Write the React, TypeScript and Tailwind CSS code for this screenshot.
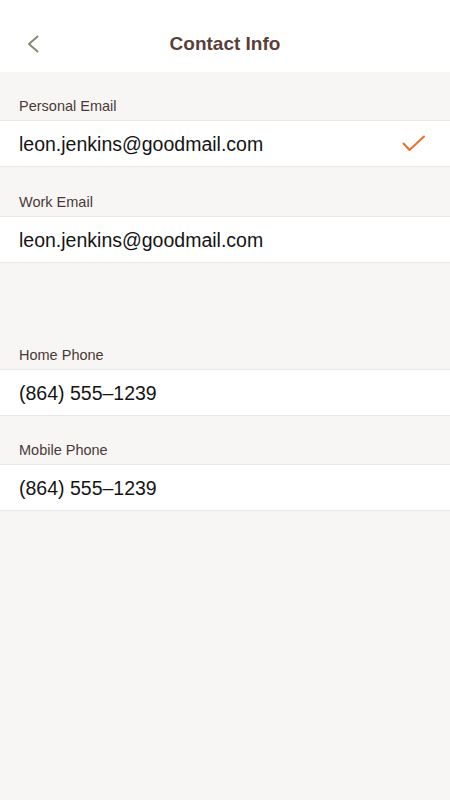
import React from "react";

const font = { fontFamily: '"Liberation Sans", Arial, Helvetica, sans-serif' };

function Label({ text, h }: { text: string; h: string }) {
  return (
    <div className={`flex items-end px-[19px] pb-[4px] text-[14.5px] leading-[20px] text-[#4a3a37] ${h}`}>
      {text}
    </div>
  );
}

function Row({ value, checked }: { value: string; checked?: boolean }) {
  return (
    <div className="flex h-[47px] items-center justify-between border-y border-[#ebe8e4] bg-white pl-[19px] pr-[24px] pt-[3px] text-[19.5px] text-[#141414]">
      <span>{value}</span>
      {checked && (
        <svg width="24" height="18" viewBox="0 0 24 18" fill="none" className="-mt-[3px]">
          <polyline
            points="1.5,8.5 7.5,15 22,1.5"
            stroke="#e4712b"
            strokeWidth="2"
            strokeLinecap="round"
            strokeLinejoin="round"
          />
        </svg>
      )}
    </div>
  );
}

export default function App() {
  return (
    <div className="min-h-[800px] w-full bg-[#f8f6f4]" style={font}>
      <div className="relative flex h-[72px] items-center justify-center bg-white">
        <button className="absolute left-[26px] top-[34px]">
          <svg width="14" height="20" viewBox="0 0 14 20" fill="none">
            <polyline
              points="11.5,2.5 3,10 11.5,17.5"
              stroke="#8c8672"
              strokeWidth="2"
              strokeLinecap="round"
              strokeLinejoin="round"
            />
          </svg>
        </button>
        <h1 className="mt-[17px] text-[19px] font-bold text-[#5a3f39]">Contact Info</h1>
      </div>
      <div>
        <Label text="Personal Email" h="h-[48px]" />
        <Row value="leon.jenkins@goodmail.com" checked />
        <Label text="Work Email" h="h-[49px]" />
        <Row value="leon.jenkins@goodmail.com" />
        <Label text="Home Phone" h="h-[106px]" />
        <Row value="(864) 555–1239" />
        <Label text="Mobile Phone" h="h-[48px]" />
        <Row value="(864) 555–1239" />
      </div>
    </div>
  );
}
